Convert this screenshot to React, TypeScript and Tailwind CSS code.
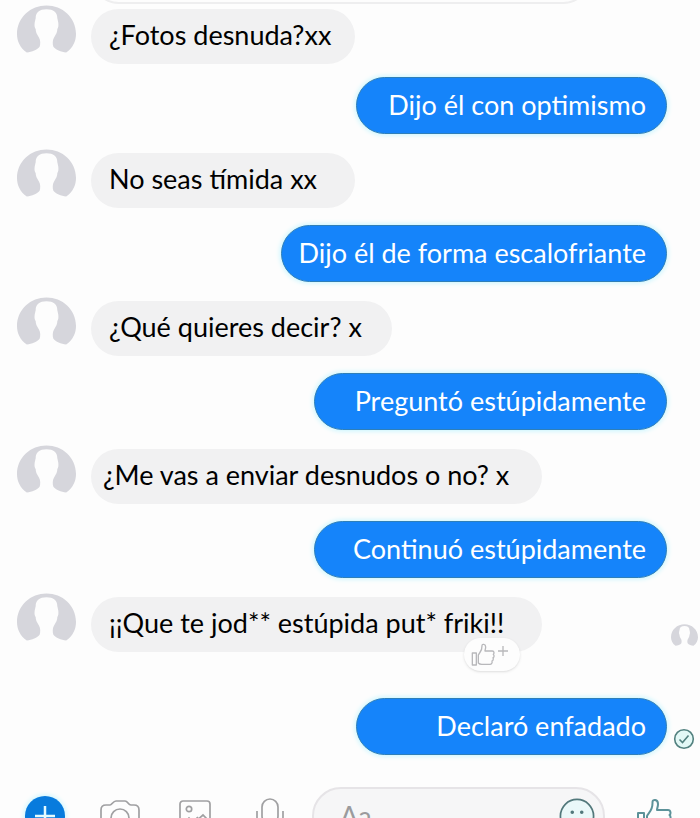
import React from "react";
import { clsx } from "clsx";

interface Message {
  id: number;
  text: string;
  from: "them" | "me";
  size: string;
  spacing: string;
  reaction?: boolean;
  seen?: boolean;
  delivered?: boolean;
}

const messages: Message[] = [
  { id: 1, from: "them", text: "¿Fotos desnuda?xx", size: "w-[264px] pl-[18px]", spacing: "mt-px" },
  { id: 2, from: "me", text: "Dijo él con optimismo", size: "w-[311px]", spacing: "mt-[13px]" },
  { id: 3, from: "them", text: "No seas tímida xx", size: "w-[264px] pl-[18px]", spacing: "mt-[15px]" },
  { id: 4, from: "me", text: "Dijo él de forma escalofriante", size: "w-[386px]", spacing: "mt-[17px]" },
  { id: 5, from: "them", text: "¿Qué quieres decir? x", size: "w-[301px] pl-[18px]", spacing: "mt-[15px]" },
  { id: 6, from: "me", text: "Preguntó estúpidamente", size: "w-[353px]", spacing: "mt-[17px]" },
  { id: 7, from: "them", text: "¿Me vas a enviar desnudos o no? x", size: "w-[451px] pl-3", spacing: "mt-[15px]" },
  { id: 8, from: "me", text: "Continuó estúpidamente", size: "w-[353px]", spacing: "mt-[17px]" },
  {
    id: 9,
    from: "them",
    text: "¡¡Que te jod** estúpida put* friki!!",
    size: "w-[451px] pl-[18px]",
    spacing: "mt-[15px]",
    reaction: true,
    seen: true,
  },
  { id: 10, from: "me", text: "Declaró enfadado", size: "w-[311px]", spacing: "mt-[46px]", delivered: true },
];

function Avatar({ className }: { className?: string }) {
  return (
    <svg viewBox="0 0 60 50" className={clsx("shrink-0", className)} aria-hidden="true">
      <path
        fill="#d6d6dc"
        d="M10 48 C3 43 0 36 0 29 C0 12 14 0 30 0 C46 0 60 12 60 29 C60 36 57 43 50 48 C45 47 39 45 37 42 C36 39 36 35 38 32 C40 29 41 27 41 24 C43 21 42 17 41 13 C41 7 37 4 30 4 C23 4 19 7 19 13 C18 17 17 21 19 24 C19 27 20 29 22 32 C24 35 24 39 23 42 C21 45 15 47 10 48 Z"
      />
    </svg>
  );
}

function ThumbIcon({ className }: { className?: string }) {
  return (
    <svg
      viewBox="0 0 36 36"
      className={className}
      fill="none"
      stroke="currentColor"
      strokeWidth="2"
      strokeLinejoin="round"
      aria-hidden="true"
    >
      <path d="M2 15h6v18H2z" />
      <path d="M11 18c1-3 6-5 5.500-14 0-3 5.500-3 5.500 2 0 3-1 4-1 6h11c3 0 3 4 1.500 5 1.500 1 1.500 5-.5 5 1 2 0 5-1.500 5 1 3-1 5-3 5H16c-2 0-4-1-5-2z" />
    </svg>
  );
}

function IncomingMessage({ message }: { message: Message }) {
  return (
    <li className={clsx("flex h-[59px] pl-[17px] pr-[2px]", message.spacing)}>
      <Avatar className="h-[50px] w-[59px]" />
      <div
        className={clsx(
          "relative ml-[15px] flex h-[55px] items-center self-end rounded-full bg-[#f1f1f2] pb-1 text-black",
          message.size
        )}
      >
        <p className="whitespace-nowrap">{message.text}</p>
        {message.reaction && (
          <button
            type="button"
            aria-label="Like"
            className="absolute right-[22px] top-[41px] flex h-[33px] w-14 items-center rounded-full bg-[#fdfdfd] pl-[7px] text-[#b8b8bb] shadow-sm"
          >
            <ThumbIcon className="h-6 w-6" />
            <svg viewBox="0 0 12 12" className="mb-2 ml-0.5 h-3 w-3" stroke="currentColor" strokeWidth="1.3" aria-hidden="true">
              <path d="M6 1v10M1 6h10" />
            </svg>
          </button>
        )}
      </div>
      {message.seen && <Avatar className="mb-1 ml-auto h-[25px] w-[27px] self-end" />}
    </li>
  );
}

function OutgoingMessage({ message }: { message: Message }) {
  return (
    <li className={clsx("flex items-center justify-end", message.spacing)}>
      <div
        className={clsx(
          "flex h-[57px] items-center justify-end rounded-full border border-[#2f7fb8] bg-[#1584fa] pb-0.5 pr-5 text-white shadow-[0_0_5px_1px_#c5f5ff]",
          message.size
        )}
      >
        <p className="whitespace-nowrap">{message.text}</p>
      </div>
      <div className="flex w-[33px] justify-center self-end pb-[5px] pl-px">
        {message.delivered && (
          <svg
            viewBox="0 0 22 22"
            className="h-[22px] w-[22px]"
            fill="#e3f8f6"
            stroke="#52817f"
            strokeWidth="1.6"
            aria-hidden="true"
          >
            <circle cx="11" cy="11" r="9.3" />
            <path d="M6.5 11.5l3 3 6-7" fill="none" />
          </svg>
        )}
      </div>
    </li>
  );
}

function Composer() {
  const iconButton = "flex w-10 shrink-0 items-center justify-center text-[#a0a0a2]";

  return (
    <form className="mt-8 flex h-[58px] shrink-0 items-center pl-[25px] pr-[26px]" onSubmit={(e) => e.preventDefault()}>
      <div className="flex gap-[35px]">
        <button
          type="button"
          aria-label="More"
          className="flex h-10 w-10 shrink-0 items-center justify-center rounded-full bg-[#087bdd] text-[#e4fbff] shadow-[0_0_5px_1px_#c5f5ff]"
        >
          <svg viewBox="0 0 20 20" className="h-5 w-5" stroke="currentColor" strokeWidth="2.5" aria-hidden="true">
            <path d="M10 0v20M0 10h20" />
          </svg>
        </button>
        <button type="button" aria-label="Camera" className={iconButton}>
          <svg viewBox="0 0 40 32" className="h-8 w-10" fill="none" stroke="currentColor" strokeWidth="1.7" aria-hidden="true">
            <path d="M6 5h4c2 0 3-4 6-4h9c3 0 3 4 6 4h3c3 0 5 2 5 5v16c0 3-2 5-5 5H6c-3 0-5-2-5-5V10c0-3 2-5 5-5z" />
            <circle cx="20" cy="18" r="9" />
          </svg>
        </button>
        <button type="button" aria-label="Photos" className={iconButton}>
          <svg viewBox="0 0 32 32" className="h-8 w-8" fill="none" stroke="currentColor" strokeWidth="1.7" aria-hidden="true">
            <rect x="1" y="1" width="30" height="30" rx="3" />
            <circle cx="10" cy="9" r="2.7" />
            <path d="M2 26l8-8 5 5 9-8 7 7M17 19l2-2" />
          </svg>
        </button>
        <button type="button" aria-label="Voice" className={iconButton}>
          <svg viewBox="0 0 28 36" className="h-9 w-7" fill="none" stroke="currentColor" strokeWidth="1.7" aria-hidden="true">
            <rect x="6" y="1" width="16" height="25" rx="8" />
            <path d="M1 13v6c0 7 6 12 13 12s13-5 13-12v-6M14 31v5" />
          </svg>
        </button>
      </div>
      <div className="ml-[22px] flex h-full min-w-0 flex-1 items-center rounded-full border-2 border-[#e6e4e7] bg-[#f6f6f7] pl-[26px] pr-2">
        <input
          type="text"
          aria-label="Message"
          placeholder="Aa"
          className="min-w-0 flex-1 bg-transparent outline-none placeholder:text-[#9b9b9d]"
        />
        <button type="button" aria-label="Emoji" className="shrink-0 text-[#52787b]">
          <svg viewBox="0 0 38 38" className="h-9 w-9" fill="#eaf8f9" stroke="currentColor" strokeWidth="1.8" aria-hidden="true">
            <circle cx="19" cy="19" r="17.5" />
            <circle cx="14" cy="15" r="1" fill="currentColor" />
            <circle cx="24" cy="15" r="1" fill="currentColor" />
            <path d="M10 23c3 8 15 8 18 0" fill="none" />
          </svg>
        </button>
      </div>
      <button type="button" aria-label="Send like" className="ml-[29px] flex w-10 shrink-0 justify-center text-[#5c9299]">
        <ThumbIcon className="h-9 w-9" />
      </button>
    </form>
  );
}

export default function App() {
  return (
    <main className="flex h-screen flex-col overflow-hidden bg-[#fdfdfd] font-['Lato',sans-serif] text-[27px] leading-8">
      <div className="-mt-[52px] ml-[91px] h-14 w-[500px] max-w-full shrink-0 rounded-full border-2 border-[#eeeeef]" />
      <ul className="shrink-0">
        {messages.map((message) =>
          message.from === "them" ? (
            <IncomingMessage key={message.id} message={message} />
          ) : (
            <OutgoingMessage key={message.id} message={message} />
          )
        )}
      </ul>
      <Composer />
    </main>
  );
}
